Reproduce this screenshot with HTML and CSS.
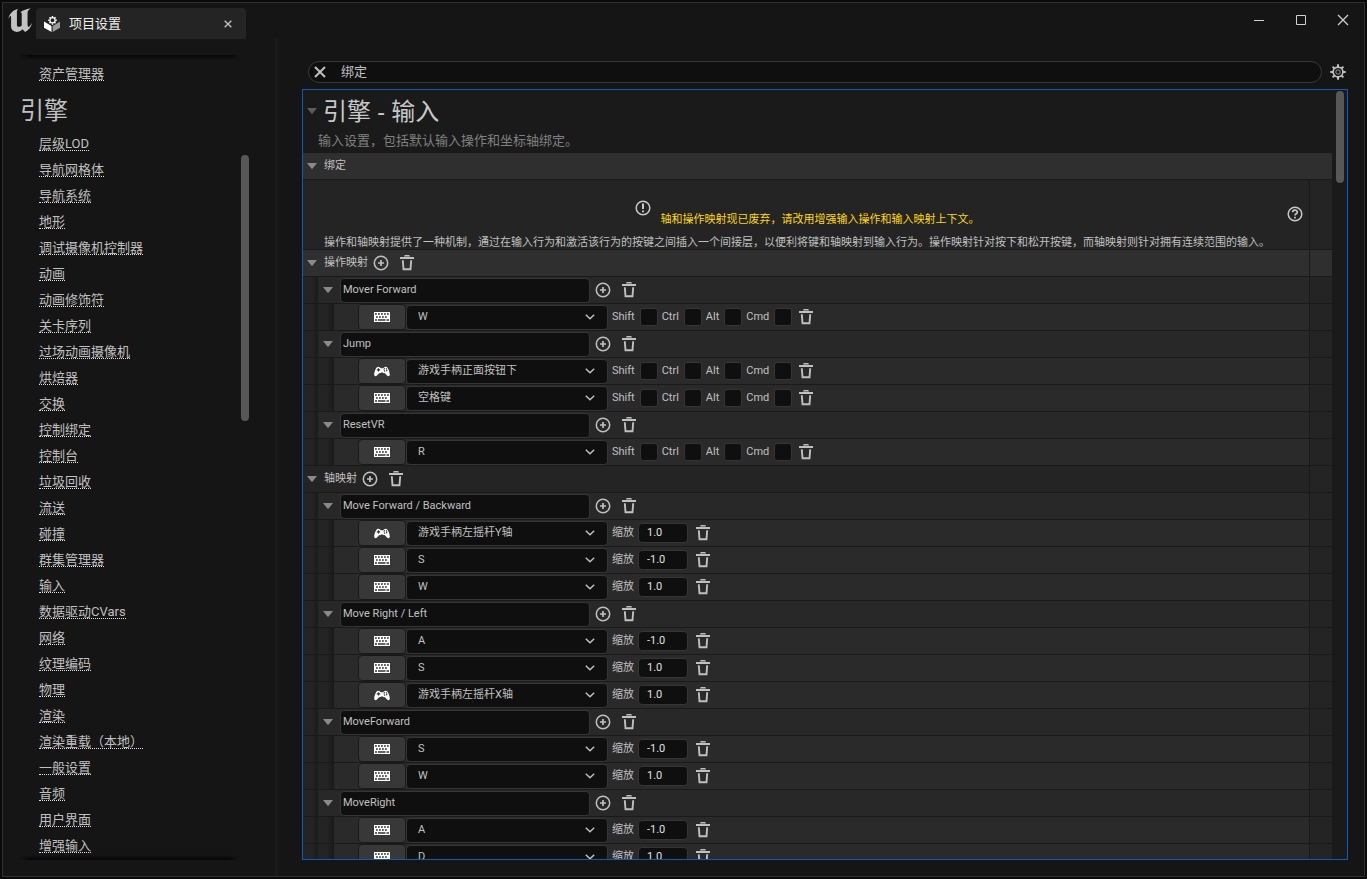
FILE: index.html
```html
<!DOCTYPE html>
<html lang="zh-CN">
<head>
<meta charset="utf-8">
<title>项目设置</title>
<link rel="stylesheet" href="styles.css">
</head>
<body>
<svg class="sprite" aria-hidden="true">
  <symbol id="tri" viewBox="0 0 10 6"><path d="M0 0H10L5.6 5.4Q5 6 4.400 5.400Z" fill="currentColor"/></symbol>
  <symbol id="plus" viewBox="0 0 16 16"><circle cx="8" cy="8" r="6.700" fill="none" stroke="currentColor" stroke-width="1.500"/><path d="M8 5V11M5 8H11" stroke="currentColor" stroke-width="1.700"/></symbol>
  <symbol id="trash" viewBox="0 0 14 16"><path d="M4 1.400Q4.200 0 5.400 0H8.600Q9.800 0 10 1.400ZM0 2H14V4H0Z" fill="currentColor"/><path d="M2.800 5.300L3.500 14.200H10.500L11.200 5.300" fill="none" stroke="currentColor" stroke-width="1.900"/></symbol>
  <symbol id="keyb" viewBox="0 0 16 10"><path d="M0 0H16V10H0Z" fill="#fff"/><path d="M1 2H15M2 5H14" stroke="#333" stroke-width="1.500" stroke-dasharray="1.800 1.200"/><path d="M1 8H3M4 8H11.500M12.500 8H15" stroke="#333" stroke-width="1.500"/></symbol>
  <symbol id="pad" viewBox="0 0 16 11"><path d="M3.300 .9Q4.700 .3 6 1.400L6.800 2.200H9.200L10 1.400Q11.300 .3 12.700 .9C14.300 1.800 15.800 6 15.800 8.800C15.600 10.600 13.800 10.400 12.800 9.200L10.700 7Q9.700 7.600 8.900 6.500H7.100Q6.300 7.600 5.300 7L3.200 9.200C2.200 10.400 .4 10.600 .2 8.800C.2 6 1.700 1.800 3.300 .9Z" fill="#fff"/><path d="M4.500 2.200V5.600M2.800 3.900H6.200" stroke="#333" stroke-width="1.200"/><circle cx="11.400" cy="3.900" r="1.500" fill="none" stroke="#333" stroke-width="1.100" stroke-dasharray="1.300 1"/></symbol>
  <symbol id="chev" viewBox="0 0 10 6"><path d="M.8 .8L5 4.800L9.200 .8" fill="none" stroke="currentColor" stroke-width="1.500"/></symbol>
  <symbol id="x" viewBox="0 0 12 12"><path d="M1 1L11 11M11 1L1 11" stroke="currentColor" stroke-width="2"/></symbol>
</svg>

<div class="window">
  <header class="titlebar">
    <svg class="logo" viewBox="22 24 70 70" role="img" aria-label="Unreal Engine"><path d="M23 57C25 42 35 30 52 26C48 30 48 34 48 39V73C48 77 50 79 53 79C57 79 60 77 62 75V43C62 38 61 36 57 37C64 31 74 28 88 25C80 31 79 35 79 41V72C79 77 80 79 82 79C86 78 88 74 92 67C90 79 83 88 72 94L64 86C59 91 54 94 47 94C37 93 31 87 31 79V51C31 48 30 47 28 48C26 50 24 53 23 57Z" fill="#c2c2c2"/></svg>
    <div class="tab">
      <svg class="tab-icon" viewBox="0 0 16 16"><path d="M0 5.500L7.500 10V16L0 11.700Z" fill="#fff"/><path d="M8.700 10L16 5.500V11.700L8.700 16Z" fill="#9a9a9a"/><circle cx="8.500" cy="4.300" r="5" fill="#242424"/><circle cx="8.500" cy="4.300" r="2.600" fill="none" stroke="#fff" stroke-width="1.200"/><path d="M8.500 0V1.500M8.500 7.200V8.700M4.200 4.300H5.600M11.400 4.300H12.800M5.500 1.300L6.500 2.300M10.500 6.300L11.500 7.300M5.500 7.300L6.500 6.300M10.500 2.300L11.500 1.300" stroke="#fff" stroke-width="1.400"/></svg>
      <span class="tab-title">项目设置</span>
      <button class="icon-btn" aria-label="关闭标签"><svg class="tab-x"><use href="#x"/></svg></button>
    </div>
    <div class="win-buttons">
      <button aria-label="最小化"><svg width="10" height="10" viewBox="0 0 10 10"><path d="M0 5.500H10" stroke="#d0d0d0"/></svg></button>
      <button aria-label="最大化"><svg width="10" height="10" viewBox="0 0 10 10"><path d="M.5 .5H9.500V9.500H.5Z" fill="none" stroke="#d0d0d0"/></svg></button>
      <button aria-label="关闭"><svg width="12" height="12" viewBox="0 0 12 12"><path d="M1 1L11 11M11 1L1 11" stroke="#d0d0d0" stroke-width="1.300"/></svg></button>
    </div>
  </header>

  <div class="body">
    <aside class="side">
      <nav class="nav">
        <ul>
          <li><a href="#">资产管理器</a></li>
        </ul>
        <h2>引擎</h2>
        <ul>
          <li><a href="#">层级LOD</a></li>
          <li><a href="#">导航网格体</a></li>
          <li><a href="#">导航系统</a></li>
          <li><a href="#">地形</a></li>
          <li><a href="#">调试摄像机控制器</a></li>
          <li><a href="#">动画</a></li>
          <li><a href="#">动画修饰符</a></li>
          <li><a href="#">关卡序列</a></li>
          <li><a href="#">过场动画摄像机</a></li>
          <li><a href="#">烘焙器</a></li>
          <li><a href="#">交换</a></li>
          <li><a href="#">控制绑定</a></li>
          <li><a href="#">控制台</a></li>
          <li><a href="#">垃圾回收</a></li>
          <li><a href="#">流送</a></li>
          <li><a href="#">碰撞</a></li>
          <li><a href="#">群集管理器</a></li>
          <li><a href="#">输入</a></li>
          <li><a href="#">数据驱动CVars</a></li>
          <li><a href="#">网络</a></li>
          <li><a href="#">纹理编码</a></li>
          <li><a href="#">物理</a></li>
          <li><a href="#">渲染</a></li>
          <li><a href="#">渲染重载（本地）</a></li>
          <li><a href="#">一般设置</a></li>
          <li><a href="#">音频</a></li>
          <li><a href="#">用户界面</a></li>
          <li><a href="#">增强输入</a></li>
        </ul>
      </nav>
      <div class="thumb side-thumb"></div>
    </aside>
    <div class="splitter"></div>

    <main class="main">
      <div class="search-row">
        <div class="search">
          <button class="icon-btn" aria-label="清除搜索"><svg class="search-x"><use href="#x"/></svg></button>
          <input type="text" value="绑定" aria-label="搜索">
        </div>
        <button class="icon-btn" aria-label="视图选项"><svg width="16" height="16" viewBox="0 0 16 16"><g fill="none" stroke="#c0c0c0"><circle cx="8" cy="8" r="4.900" stroke-width="1.600"/><circle cx="8" cy="8" r="2.200" stroke="#777" stroke-width="1.200"/><path stroke-width="2" d="M8 .3V3M8 13V15.700M.3 8H3M13 8H15.700M2.600 2.600L4.400 4.400M11.600 11.600L13.400 13.400M2.600 13.400L4.400 11.600M11.600 4.400L13.400 2.600"/></g></svg></button>
      </div>

      <section class="panel">
        <div class="content">
          <div class="intro">
            <div class="intro-head"><svg class="tri dim"><use href="#tri"/></svg><h1>引擎 - 输入</h1></div>
            <p>输入设置，包括默认输入操作和坐标轴绑定。</p>
          </div>
          <div class="row category"><svg class="tri"><use href="#tri"/></svg><h3>绑定</h3></div>
          <div class="notice">
            <div class="notice-main">
              <div class="notice-top">
                <div class="warn">
                  <svg class="warn-icon" width="16" height="16" viewBox="0 0 16 16"><circle cx="8" cy="8" r="6.800" fill="none" stroke="#c8c8c8" stroke-width="1.500"/><path d="M8 3.500V9M8 10.500V12.300" stroke="#c8c8c8" stroke-width="2"/></svg>
                  <p class="warn-text">轴和操作映射现已废弃，请改用增强输入操作和输入映射上下文。</p>
                </div>
                <button class="icon-btn help" aria-label="帮助"><svg width="16" height="16" viewBox="0 0 16 16"><circle cx="8" cy="8" r="6.800" fill="none" stroke="#c8c8c8" stroke-width="1.500"/><path d="M5.700 6.300C5.700 3.400 10.300 3.400 10.300 6.200C10.300 7.800 8 7.800 8 9.600M8 10.700V12.500" fill="none" stroke="#c8c8c8" stroke-width="1.700"/></svg></button>
              </div>
              <p class="notice-text">操作和轴映射提供了一种机制，通过在输入行为和激活该行为的按键之间插入一个间接层，以便利将键和轴映射到输入行为。操作映射针对按下和松开按键，而轴映射则针对拥有连续范围的输入。</p>
            </div>
          </div>
          <div id="mappings"></div>
        </div>
        <div class="track"><div class="thumb"></div></div>
      </section>
    </main>
  </div>
</div>
<script src="script.js"></script>
</body>
</html>
```
FILE: styles.css
```css
* { box-sizing: border-box; }
body {
  margin: 0;
  height: 100vh;
  padding: 2px;
  overflow: hidden;
  background: #0a0a0a;
  color: #c0c0c0;
  font: 11px/14px Roboto, "Noto Sans CJK SC", sans-serif;
}
h1, h2, h3, p, ul { margin: 0; padding: 0; font-weight: 400; }
ul { list-style: none; }
svg { display: block; flex: none; }
button, input, select { font: inherit; color: inherit; margin: 0; }
.sprite { position: absolute; width: 0; height: 0; }
.icon-btn { display: flex; flex: none; padding: 0; border: 0; background: none; color: #c0c0c0; }

.window {
  display: flex;
  flex-direction: column;
  height: calc(100vh - 4px);
  border: 1px solid #303030;
  background: #151515;
}

/* title bar */
.titlebar { display: flex; align-items: flex-start; height: 36px; flex: none; }
.logo { width: 24px; height: 24px; margin: 5px 4px 0 5px; }
.tab {
  display: flex;
  align-items: center;
  width: 210px;
  height: 31px;
  margin-top: 5px;
  padding: 0 14px 0 8px;
  border-radius: 4px 4px 0 0;
  background: #242424;
  color: #f0f0f0;
  font-size: 13px;
}
.tab-icon { width: 16px; height: 16px; margin-right: 9px; }
.tab-title { flex: 1; }
.tab-x { width: 8px; height: 8px; }
.win-buttons { display: flex; margin-left: auto; }
.win-buttons button {
  display: flex;
  align-items: center;
  justify-content: center;
  width: 42px;
  height: 34px;
  padding: 0;
  border: 0;
  background: none;
}

/* body */
.body { display: flex; flex: 1; min-height: 0; }
.side { display: flex; gap: 2px; width: 272px; padding: 16px 0 16px 17px; }
.splitter { width: 3px; background: #1a1a1a; }
.nav {
  position: relative;
  width: 219px;
  padding-top: 6px;
  overflow: hidden;
  font-size: 13px;
}
.nav::before, .nav::after {
  content: "";
  position: absolute;
  left: 0;
  right: 0;
  height: 5px;
  -webkit-mask-image: linear-gradient(90deg, transparent, #000 10px, #000 calc(100% - 10px), transparent);
  mask-image: linear-gradient(90deg, transparent, #000 10px, #000 calc(100% - 10px), transparent);
}
.nav::before { top: 0; background: linear-gradient(#050505, #151515); }
.nav::after { bottom: 0; background: linear-gradient(#151515, #050505); }
.nav h2 { height: 44px; padding-top: 2px; font-size: 24px; line-height: 44px; }
.nav li { height: 26px; padding: 5px 0 0 19px; }
.nav a {
  display: inline-block;
  height: 15px;
  border-bottom: 1px dotted #e0e0e0;
  color: #c0c0c0;
  line-height: 16px;
  text-decoration: none;
  vertical-align: top;
}
.thumb { width: 8px; height: 12%; border-radius: 4px; background: #575757; }
.side-thumb { height: 33%; margin-top: 100px; }

.main { display: flex; flex-direction: column; flex: 1; min-width: 0; padding: 22px 16px 16px 24px; }
.search-row { display: flex; align-items: center; gap: 8px; padding: 0 2px 0 6px; margin-bottom: 6px; }
.search {
  display: flex;
  align-items: center;
  flex: 1;
  height: 22px;
  padding-left: 5px;
  border: 1px solid #383838;
  border-radius: 11px;
  background: #0f0f0f;
}
.search-x { width: 12px; height: 12px; }
.search input {
  flex: 1;
  height: 20px;
  padding: 0 0 4px;
  margin-left: 15px;
  border: 0;
  outline: 0;
  background: none;
  font-size: 13px;
}

/* details panel */
.panel {
  display: flex;
  flex: 1;
  min-height: 0;
  overflow: hidden;
  border: 1px solid #0560b5;
  background: #1a1a1a;
}
.content { flex: 1; min-width: 0; }
.track { width: 15px; padding: 1px 0 0 4px; }
.tri { width: 10px; height: 6px; color: #8a8a8a; }
.tri.dim { color: #5c5c5c; }
.intro { height: 63px; padding-left: 4px; }
.intro-head { display: flex; align-items: center; gap: 6px; height: 42px; }
.intro h1 { font-family: "Noto Sans", "Noto Sans CJK SC", sans-serif; font-size: 24px; line-height: 42px; color: #c8c8c8; }
.intro p { padding-left: 11px; font-size: 13px; line-height: 18px; color: #808080; }
.row { display: flex; height: 27px; border-bottom: 1px solid #1a1a1a; }
.category { align-items: center; gap: 7px; padding-left: 4px; background: #2f2f2f; }
h3 { font-size: 11px; }

.notice { display: flex; height: 70px; padding-right: 22px; border-bottom: 1px solid #1a1a1a; background: #242424; }
.notice-main { flex: 1; min-width: 0; border-right: 1px solid #1a1a1a; }
.notice-top { display: flex; align-items: flex-start; height: 55px; padding-right: 6px; }
.warn { display: flex; flex: 1; justify-content: center; gap: 10px; padding: 20px 0 0 24px; }
.warn-text { padding-top: 13px; color: #ffd800; }
.help { margin-top: 26px; }
.notice-text { padding: 1px 0 0 21px; white-space: nowrap; overflow: hidden; }

/* mapping rows */
.indent { width: 15px; flex: none; background: linear-gradient(90deg, #242424 9px, #1b1b1b 15px); }
.indent + .indent { width: 16px; }
.cell { display: flex; align-items: center; flex: 1; min-width: 0; background: #282828; }
.deep .cell { background: #2a2a2a; }
.group .cell { padding-left: 4px; background: #242424; }
.group.lit .cell, .group.lit .extra { background: #2f2f2f; }
.group h3 { margin: 0 5px 0 7px; }
.extra { width: 23px; flex: none; border-left: 1px solid #1a1a1a; background: #242424; }
.plus { width: 16px; height: 16px; }
.trash { width: 14px; height: 16px; }
.gap { margin-left: 11px; }
.mapping .cell { padding-left: 5px; }
.name {
  width: 250px;
  height: 25px;
  margin: 0 5px 0 7px;
  padding: 0 2px 2px;
  border: 1px solid #353535;
  border-radius: 4px;
  outline: 0;
  background: #0f0f0f;
}
.deep .cell { padding-left: 24px; }
.key-btn {
  display: flex;
  align-items: center;
  justify-content: center;
  width: 48px;
  height: 26px;
  padding: 0;
  border: 1px solid #1a1a1a;
  border-radius: 4px;
  background: #383838;
}
.keyb { width: 16px; height: 10px; }
.pad { width: 16px; height: 11px; }
.combo { display: grid; align-items: center; width: 202px; margin-right: 4px; }
.combo select, .combo svg { grid-area: 1 / 1; }
.combo select {
  appearance: none;
  height: 25px;
  padding: 0 24px 0 11px;
  border: 1px solid #353535;
  border-radius: 4px;
  outline: 0;
  background: #0f0f0f;
}
.combo svg { justify-self: end; width: 10px; height: 6px; margin-right: 13px; pointer-events: none; }
.mod { display: flex; align-items: center; gap: 5px; margin-right: 4px; }
.mod input {
  appearance: none;
  width: 18px;
  height: 18px;
  border: 1px solid #353535;
  border-radius: 3px;
  background: #0f0f0f;
}
.mod-trash { margin-left: 3px; }
.scale { display: flex; align-items: center; gap: 4px; margin-right: 8px; }
.scale input {
  width: 50px;
  height: 20px;
  padding: 0 8px 2px;
  border: 1px solid #353535;
  border-radius: 4px;
  outline: 0;
  background: #0f0f0f;
  color: #e0e0e0;
}
```
FILE: script.js
```js
const PAD = "pad";
const KEY = "keyb";

const groups = [
  {
    title: "操作映射", lit: true,
    items: [
      { name: "Mover Forward", keys: [[KEY, "W"]] },
      { name: "Jump", keys: [[PAD, "游戏手柄正面按钮下"], [KEY, "空格键"]] },
      { name: "ResetVR", keys: [[KEY, "R"]] }
    ]
  },
  {
    title: "轴映射",
    items: [
      { name: "Move Forward / Backward", keys: [[PAD, "游戏手柄左摇杆Y轴", "1.0"], [KEY, "S", "-1.0"], [KEY, "W", "1.0"]] },
      { name: "Move Right / Left", keys: [[KEY, "A", "-1.0"], [KEY, "S", "1.0"], [PAD, "游戏手柄左摇杆X轴", "1.0"]] },
      { name: "MoveForward", keys: [[KEY, "S", "-1.0"], [KEY, "W", "1.0"]] },
      { name: "MoveRight", keys: [[KEY, "A", "-1.0"], [KEY, "D", "1.0"]] }
    ]
  }
];

const icon = (id, cls = "") => `<svg class="${id} ${cls}"><use href="#${id}"/></svg>`;
const iconButton = (id, label, cls = "") =>
  `<button class="icon-btn ${cls}" aria-label="${label}">${icon(id)}</button>`;
const addRemove = iconButton("plus", "添加") + iconButton("trash", "移除", "gap");
const row = (cls, depth, cell) =>
  `<div class="row ${cls}">${'<div class="indent"></div>'.repeat(depth)}<div class="cell">${cell}</div><div class="extra"></div></div>`;

const modifiers = ["Shift", "Ctrl", "Alt", "Cmd"]
  .map(m => `<label class="mod"><span>${m}</span><input type="checkbox"></label>`).join("");

function keyRow([device, key, scale]) {
  const tail = scale
    ? `<label class="scale"><span>缩放</span><input type="text" value="${scale}"></label>${iconButton("trash", "移除")}`
    : modifiers + iconButton("trash", "移除", "mod-trash");
  return row("deep", 2,
    `<button class="key-btn" aria-label="选择按键">${icon(device)}</button>` +
    `<div class="combo"><select aria-label="按键"><option>${key}</option></select>${icon("chev")}</div>` + tail);
}

document.getElementById("mappings").innerHTML = groups.map(g =>
  row("group" + (g.lit ? " lit" : ""), 0, icon("tri") + `<h3>${g.title}</h3>` + addRemove) +
  g.items.map(item =>
    row("mapping", 1, icon("tri") + `<input class="name" type="text" aria-label="映射名称" value="${item.name}">` + addRemove) +
    item.keys.map(keyRow).join("")
  ).join("")
).join("");
```
